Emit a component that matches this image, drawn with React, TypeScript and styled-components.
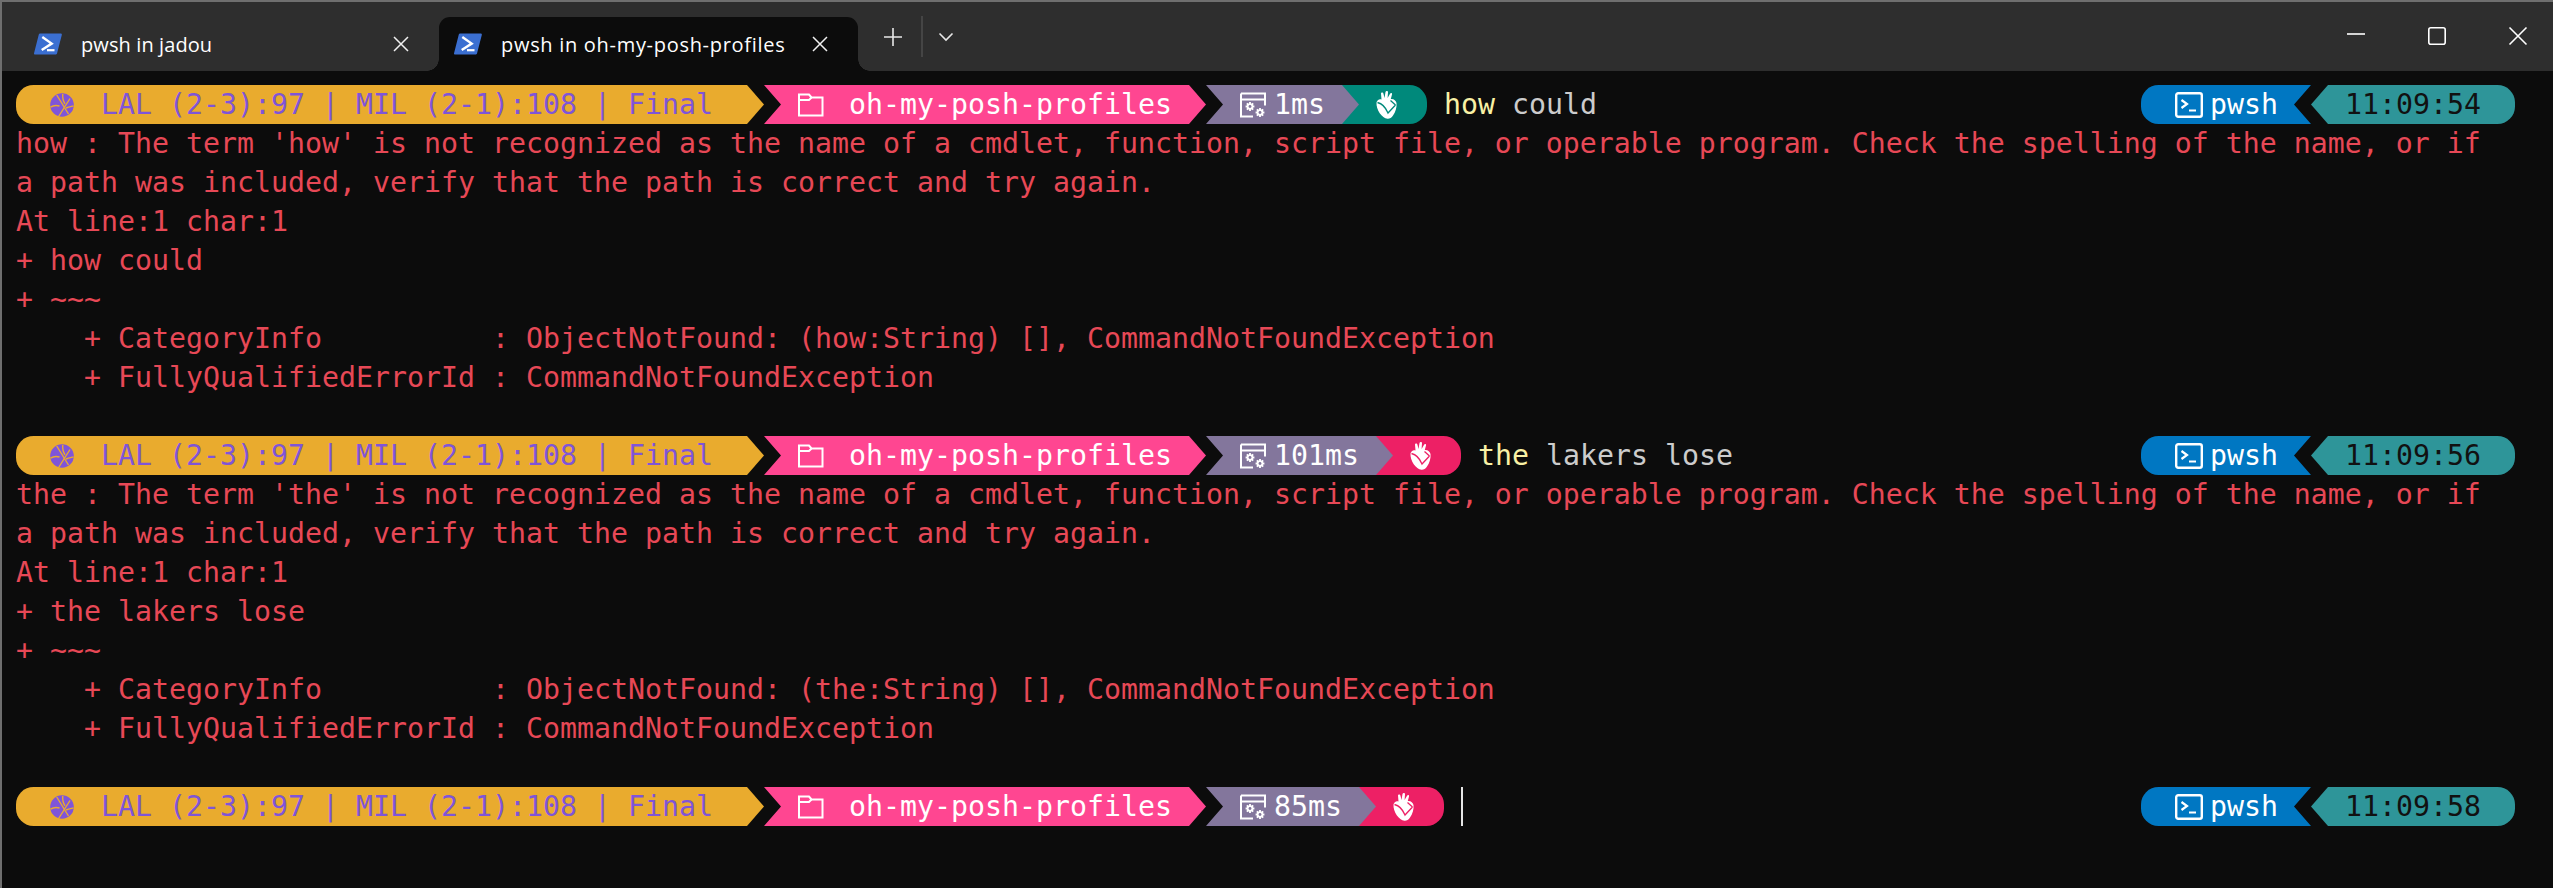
import React from "react";
import styled, { createGlobalStyle } from "styled-components";

const CELL = 17;
const ROW = 39;

const Global = createGlobalStyle`
  html, body { margin: 0; padding: 0; background: #0c0c0c; }
  body { width: 2553px; height: 888px; overflow: hidden; }
`;

const Win = styled.div`
  box-sizing: border-box;
  width: 2553px;
  height: 888px;
  border-top: 2px solid #6f6f6f;
  border-left: 2px solid #6f6f6f;
  background: #0c0c0c;
  display: flex;
  flex-direction: column;
`;

const TabBar = styled.div`
  box-sizing: border-box;
  height: 69px;
  flex: none;
  background: #2e2e2e;
  display: flex;
  align-items: flex-end;
  font-family: "Open Sans", "Noto Sans", sans-serif;
  font-size: 20px;
  color: #fff;
`;

const Tab = styled.div<{ $active?: boolean; $w: number; $pad: number }>`
  position: relative;
  box-sizing: border-box;
  flex: none;
  width: ${(p) => p.$w}px;
  height: 54px;
  padding-left: ${(p) => p.$pad}px;
  display: flex;
  align-items: flex-start;
  padding-top: 14px;
  background: ${(p) => (p.$active ? "#0c0c0c" : "transparent")};
  border-radius: 11px 11px 0 0;
`;

const TabIcon = styled.svg`
  flex: none;
  width: 28px;
  height: 22px;
  margin: 2px 19px 0 0;
`;

const TabTitle = styled.span<{ $spacing: number }>`
  flex: 1;
  line-height: 27px;
  white-space: nowrap;
  letter-spacing: ${(p) => p.$spacing}px;
`;

const TabClose = styled.svg`
  flex: none;
  width: 16px;
  height: 16px;
  margin: 5px 30px 0 0;
`;

const Concave = styled.div<{ $side: "left" | "right" }>`
  position: absolute;
  bottom: 0;
  ${(p) => p.$side}: -12px;
  width: 12px;
  height: 12px;
  background: radial-gradient(
    circle at ${(p) => (p.$side === "left" ? "0 0" : "100% 0")},
    #2e2e2e 11.5px,
    #0c0c0c 12px
  );
`;

const BarTools = styled.div`
  flex: none;
  height: 69px;
  display: flex;
  align-items: center;
  margin-left: 25px;
`;

const ToolIcon = styled.svg<{ $w: number; $mr: number }>`
  flex: none;
  width: ${(p) => p.$w}px;
  height: 20px;
  margin-right: ${(p) => p.$mr}px;
`;

const ToolDivider = styled.div`
  flex: none;
  width: 2px;
  height: 41px;
  background: #454545;
  margin-right: 15px;
`;

const WinControls = styled.div`
  margin-left: auto;
  height: 69px;
  display: flex;
  align-items: flex-start;
  padding-right: 25px;
`;

const WinIcon = styled.svg<{ $last?: boolean }>`
  flex: none;
  width: 20px;
  height: 20px;
  margin-top: 24px;
  margin-right: ${(p) => (p.$last ? 0 : 61)}px;
`;

const Term = styled.div`
  box-sizing: border-box;
  flex: 1;
  padding: 14px 0 0 14px;
  width: 2513px;
  font-family: "DejaVu Sans Mono", "Liberation Mono", monospace;
  font-size: 28.24px;
  color: #e74856;
`;

const Line = styled.div`
  height: ${ROW}px;
  line-height: ${ROW}px;
  white-space: pre;
`;

const PromptRow = styled.div`
  height: ${ROW}px;
  width: ${CELL * 147}px;
  display: flex;
  justify-content: space-between;
`;

const Side = styled.div`
  display: flex;
  height: ${ROW}px;
`;

const Seg = styled.div<{ $bg: string; $fg?: string; $cells: number; $pad?: number; $l?: boolean; $r?: boolean; $notch?: "l" | "r" }>`
  flex: none;
  box-sizing: border-box;
  width: ${(p) => p.$cells * CELL}px;
  height: ${ROW}px;
  padding-left: ${(p) => (p.$pad ?? 0) * CELL}px;
  background: ${(p) => p.$bg};
  color: ${(p) => p.$fg ?? "#fff"};
  display: flex;
  align-items: center;
  white-space: pre;
  line-height: ${ROW}px;
  border-radius: ${(p) => (p.$l ? `${ROW / 2 - 2}px 0 0 ${ROW / 2 - 2}px` : p.$r ? `0 ${ROW / 2 - 2}px ${ROW / 2 - 2}px 0` : "0")};
  ${(p) => p.$notch === "l" && `clip-path: polygon(0 0, 100% 0, 100% 100%, 0 100%, ${CELL}px 50%);`}
  ${(p) => p.$notch === "r" && `clip-path: polygon(0 0, 100% 0, calc(100% - ${CELL}px) 50%, 100% 100%, 0 100%);`}
`;

const Arrow = styled.div<{ $fg: string; $bg?: string }>`
  flex: none;
  width: ${CELL}px;
  height: ${ROW}px;
  background: ${(p) => p.$bg ?? "transparent"};
  position: relative;
  &::before {
    content: "";
    position: absolute;
    inset: 0;
    background: ${(p) => p.$fg};
    clip-path: polygon(0 0, 100% 50%, 0 100%);
  }
`;

const ArrowBack = styled(Arrow)`
  &::before {
    clip-path: polygon(100% 0, 0 50%, 100% 100%);
  }
`;

const SegIcon = styled.svg<{ $w: number; $mr: number }>`
  flex: none;
  width: ${(p) => p.$w}px;
  height: 30px;
  margin-right: ${(p) => p.$mr}px;
`;

const Cmd = styled.span`
  color: #f9f1a5;
`;

const Arg = styled.span`
  color: #cccccc;
`;

const Input = styled.div`
  flex: none;
  margin-left: ${CELL}px;
  line-height: ${ROW}px;
  white-space: pre;
`;

const Caret = styled.div`
  flex: none;
  margin-left: ${CELL}px;
  width: 2px;
  height: ${ROW}px;
  background: #e6e6e6;
`;

const Ball = () => (
  <SegIcon $w={24} $mr={27} viewBox="0 0 24 30">
    <circle cx="12" cy="15" r="11.8" fill="#7f55d8" />
    <g stroke="#e9ab2e" strokeWidth="1.4" fill="none">
      <path d="M6.7 5 L18.5 24" />
      <path d="M20 8.5 L8.3 27" />
      <path d="M0.5 17.2 C3 15.5 6 15 9.5 16" />
      <path d="M12.7 4 C12.5 8 13 11 15 13.8" />
      <path d="M16 18 C18 17 21 16.5 23.5 16" />
    </g>
  </SegIcon>
);

const Folder = () => (
  <SegIcon $w={26} $mr={25} viewBox="0 0 26 30" fill="none" stroke="#fff" strokeWidth="2">
    <path d="M1 4.5 H11 L13.5 7.5 H24.5 V25.5 H1 Z" />
    <path d="M1 10 H11 L13.5 7.5" />
  </SegIcon>
);

const Gear = ({ cx, cy, r, hole }: { cx: number; cy: number; r: number; hole: string }) => (
  <g>
    <circle cx={cx} cy={cy} r={r * 0.72} fill="#fff" />
    <g stroke="#fff" strokeWidth={r * 0.42}>
      <path d={`M${cx - r} ${cy} H${cx + r}`} />
      <path d={`M${cx} ${cy - r} V${cy + r}`} />
      <path d={`M${cx - r * 0.72} ${cy - r * 0.72} L${cx + r * 0.72} ${cy + r * 0.72}`} />
      <path d={`M${cx - r * 0.72} ${cy + r * 0.72} L${cx + r * 0.72} ${cy - r * 0.72}`} />
    </g>
    <circle cx={cx} cy={cy} r={r * 0.32} fill={hole} />
  </g>
);

const Exec = () => (
  <SegIcon $w={26} $mr={8} viewBox="0 0 26 30">
    <path d="M1 3.5 H25 V15.5 M1 3.5 V26.5 H13 M1 9.5 H25" fill="none" stroke="#fff" strokeWidth="2" />
    <Gear cx={10} cy={16.5} r={4.4} hole="#83769c" />
    <Gear cx={20} cy={22.5} r={4.4} hole="#83769c" />
  </SegIcon>
);

const Heart = ({ bg }: { bg: string }) => (
  <SegIcon $w={21} $mr={0} viewBox="0 0 21 30">
    <path
      d="M0.5 12.5 C1 10 3.5 8.5 5.5 9.5 L5 3.5 C5 2 7.2 2 7.4 3.5 L8.5 8 L9.5 2 C9.8 0.8 12 0.8 12 2.2 L11.6 8 L14.2 3.6 C15 2.5 16.5 3.2 16 4.6 L14.8 9 C17.5 8.5 20 10.5 20.5 13 C21 17 19.5 22 17 25.5 C15.5 27.8 13.5 29 11.5 28.8 C6 28 0 20 0.5 12.5 Z"
      fill="#fff"
    />
    <path d="M1.5 12.5 C6 13.5 9.5 17 12 23 L19.5 15 M14.5 10.5 L19.5 15" fill="none" stroke={bg} strokeWidth="1.3" />
  </SegIcon>
);

const Shell = () => (
  <SegIcon $w={28} $mr={7} viewBox="0 0 28 30">
    <rect x="1.2" y="3.2" width="25.6" height="23.6" rx="2" fill="none" stroke="#fff" strokeWidth="2.4" />
    <path d="M6.5 10 L12 14 L6.5 18" fill="none" stroke="#fff" strokeWidth="2.2" />
    <path d="M14 20.5 H21" stroke="#fff" strokeWidth="2.2" />
  </SegIcon>
);

const PwshLogo = () => (
  <TabIcon viewBox="0 0 28 22">
    <path d="M6 0.5 H26.5 C27.5 0.5 28 1 27.8 2 L23 20.5 C22.8 21.3 22 21.5 21.5 21.5 H1 C0.3 21.5 -0.2 21 0.1 20 L4.8 1.5 C5 0.8 5.4 0.5 6 0.5 Z" fill="#3b6fd1" />
    <path d="M8.3 3.9 L17.7 10.6 L7.7 17" fill="none" stroke="#fff" strokeWidth="2.4" />
    <path d="M13 17.2 H20.5" stroke="#fff" strokeWidth="2.2" />
  </TabIcon>
);

const CloseIcon = () => (
  <TabClose viewBox="0 0 16 16">
    <path d="M1 1 L15 15 M15 1 L1 15" stroke="#f0f0f0" strokeWidth="1.5" />
  </TabClose>
);

const ErrorBlock = ({ word, cmd }: { word: string; cmd: string }) => (
  <>
    <Line>{`${word} : The term '${word}' is not recognized as the name of a cmdlet, function, script file, or operable program. Check the spelling of the name, or if`}</Line>
    <Line>a path was included, verify that the path is correct and try again.</Line>
    <Line>At line:1 char:1</Line>
    <Line>{`+ ${cmd}`}</Line>
    <Line>{`+ ~~~`}</Line>
    <Line>{`    + CategoryInfo          : ObjectNotFound: (${word}:String) [], CommandNotFoundException`}</Line>
    <Line>{`    + FullyQualifiedErrorId : CommandNotFoundException`}</Line>
    <Line />
  </>
);

const RightPrompt = ({ time }: { time: string }) => (
  <Side>
    <Seg $bg="#0077c2" $cells={10} $pad={2} $l $notch="r">
      <Shell />
      pwsh
    </Seg>
    <ArrowBack $fg="#2e9599" />
    <Seg $bg="#2e9599" $fg="#111" $cells={11} $pad={1} $r>
      {time}
    </Seg>
  </Side>
);

const Prompt = ({ time, heartBg, ms, children }: { time: string; heartBg: string; ms: string; children?: React.ReactNode }) => (
  <PromptRow>
    <Side>
      <Seg $bg="#e9ab2e" $fg="#7f55d8" $cells={43} $pad={2} $l>
        <Ball />
        LAL (2-3):97 | MIL (2-1):108 | Final
      </Seg>
      <Arrow $fg="#e9ab2e" />
      <Seg $bg="#ff4691" $cells={25} $pad={2} $notch="l">
        <Folder />
        oh-my-posh-profiles
      </Seg>
      <Arrow $fg="#ff4691" />
      <Seg $bg="#83769c" $cells={5 + ms.length} $pad={2} $notch="l">
        <Exec />
        {ms}
      </Seg>
      <Arrow $fg="#83769c" $bg={heartBg} />
      <Seg $bg={heartBg} $cells={4} $pad={1} $r>
        <Heart bg={heartBg} />
      </Seg>
      {children}
    </Side>
    <RightPrompt time={time} />
  </PromptRow>
);

export default function App() {
  return (
    <Win>
      <Global />
      <TabBar>
        <Tab $w={437} $pad={32}>
          <PwshLogo />
          <TabTitle $spacing={0.1}>pwsh in jadou</TabTitle>
          <CloseIcon />
        </Tab>
        <Tab $active $w={419} $pad={15}>
          <Concave $side="left" />
          <Concave $side="right" />
          <PwshLogo />
          <TabTitle $spacing={0.7}>pwsh in oh-my-posh-profiles</TabTitle>
          <CloseIcon />
        </Tab>
        <BarTools>
          <ToolIcon $w={20} $mr={18} viewBox="0 0 20 20">
            <path d="M10 1 V19 M1 10 H19" stroke="#e8e8e8" strokeWidth="1.6" />
          </ToolIcon>
          <ToolDivider />
          <ToolIcon $w={16} $mr={0} viewBox="0 0 16 20">
            <path d="M1.5 6.5 L8 13 L14.5 6.5" fill="none" stroke="#e8e8e8" strokeWidth="1.6" />
          </ToolIcon>
        </BarTools>
        <WinControls>
          <WinIcon viewBox="0 0 20 20">
            <path d="M1 8 H19" stroke="#fff" strokeWidth="1.6" />
          </WinIcon>
          <WinIcon viewBox="0 0 20 20">
            <rect x="1.8" y="1.8" width="16.4" height="16.4" rx="2" fill="none" stroke="#fff" strokeWidth="1.6" />
          </WinIcon>
          <WinIcon $last viewBox="0 0 20 20">
            <path d="M1.5 1.5 L18.5 18.5 M18.5 1.5 L1.5 18.5" stroke="#fff" strokeWidth="1.6" />
          </WinIcon>
        </WinControls>
      </TabBar>
      <Term>
        <Prompt time="11:09:54" heartBg="#00897b" ms="1ms">
          <Input>
            <Cmd>how</Cmd> <Arg>could</Arg>
          </Input>
        </Prompt>
        <ErrorBlock word="how" cmd="how could" />
        <Prompt time="11:09:56" heartBg="#ed2065" ms="101ms">
          <Input>
            <Cmd>the</Cmd> <Arg>lakers lose</Arg>
          </Input>
        </Prompt>
        <ErrorBlock word="the" cmd="the lakers lose" />
        <Prompt time="11:09:58" heartBg="#ed2065" ms="85ms">
          <Caret />
        </Prompt>
      </Term>
    </Win>
  );
}
